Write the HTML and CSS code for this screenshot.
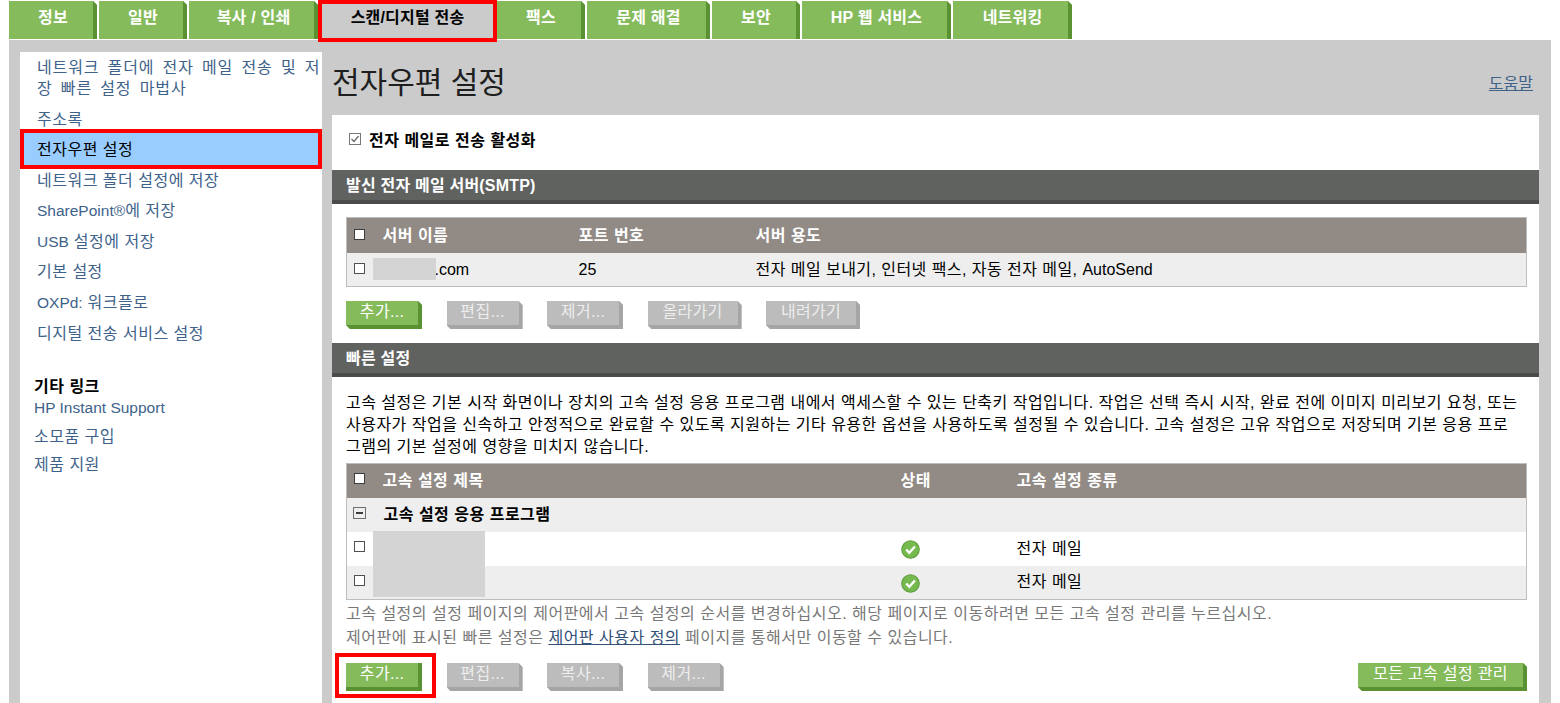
FILE: index.html
```html
<!DOCTYPE html>
<html lang="ko">
<head>
    <meta charset="utf-8">
    <title>전자우편 설정</title>
    <link rel="stylesheet" href="styles.css">
</head>
<body>
    <div id="tabs">
        <a class="tab w_88">정보</a>
        <a class="tab w_88">일반</a>
        <a class="tab w_129">복사 / 인쇄</a>
        <a class="tab tab_active">스캔/디지털 전송</a>
        <a class="tab w_88">팩스</a>
        <a class="tab w_123">문제 해결</a>
        <a class="tab w_88">보안</a>
        <a class="tab w_149">HP 웹 서비스</a>
        <a class="tab w_119">네트워킹</a>
    </div>
    <div id="frame">
        <div id="sidebar">
            <a class="side_link two_line">네트워크 폴더에 전자 메일 전송 및 저장 빠른 설정 마법사</a>
            <a class="side_link">주소록</a>
            <a class="side_link side_active">전자우편 설정</a>
            <a class="side_link">네트워크 폴더 설정에 저장</a>
            <a class="side_link"><span class="latin">SharePoint®</span>에 저장</a>
            <a class="side_link"><span class="latin">USB</span> 설정에 저장</a>
            <a class="side_link">기본 설정</a>
            <a class="side_link"><span class="latin">OXPd:</span> 워크플로</a>
            <a class="side_link">디지털 전송 서비스 설정</a>
            <div class="other_title">기타 링크</div>
            <a class="other_link"><span class="latin">HP Instant Support</span></a>
            <a class="other_link">소모품 구입</a>
            <a class="other_link">제품 지원</a>
        </div>
        <div id="main">
            <div id="title_row">
                <h1>전자우편 설정</h1>
                <a class="help">도움말</a>
            </div>
            <div id="panel">
                <div id="enable_row">
                    <svg class="check_icon" width="12" height="12" viewBox="0 0 12 12"><rect x="0.5" y="0.5" width="11" height="11" fill="#fff" stroke="#777"/><path d="M2.5 6l2.5 2.5 4.5-5.5" fill="none" stroke="#666" stroke-width="1.2"/></svg>
                    <b>전자 메일로 전송 활성화</b>
                </div>
                <div class="bar">발신 전자 메일 서버(SMTP)</div>
                <div class="section">
                    <table class="grid smtp">
                        <tr class="head">
                            <td class="c_check"><span class="box box_head"></span></td>
                            <td class="c_name">서버 이름</td>
                            <td class="c_port">포트 번호</td>
                            <td>서버 용도</td>
                        </tr>
                        <tr class="shade">
                            <td class="c_check"><span class="box"></span></td>
                            <td class="c_name c_host"><span class="blur_host"></span><span class="latin_row">.com</span></td>
                            <td class="c_port c_num"><span class="latin_row">25</span></td>
                            <td class="c_usage">전자 메일 보내기, 인터넷 팩스, 자동 전자 메일, <span class="latin_row">AutoSend</span></td>
                        </tr>
                    </table>
                    <div class="btn_row">
                        <a class="btn btn_on w_76">추가...</a>
                        <a class="btn w_76">편집...</a>
                        <a class="btn w_76">제거...</a>
                        <a class="btn w_94">올라가기</a>
                        <a class="btn w_94">내려가기</a>
                    </div>
                </div>
                <div class="bar">빠른 설정</div>
                <div class="section">
                    <p class="intro">고속 설정은 기본 시작 화면이나 장치의 고속 설정 응용 프로그램 내에서 액세스할 수 있는 단축키 작업입니다. 작업은 선택 즉시 시작, 완료 전에 이미지 미리보기 요청, 또는 사용자가 작업을 신속하고 안정적으로 완료할 수 있도록 지원하는 기타 유용한 옵션을 사용하도록 설정될 수 있습니다. 고속 설정은 고유 작업으로 저장되며 기본 응용 프로그램의 기본 설정에 영향을 미치지 않습니다.</p>
                    <table class="grid quick">
                        <tr class="head">
                            <td class="c_check"><span class="box box_head"></span></td>
                            <td class="c_title">고속 설정 제목</td>
                            <td class="c_state">상태</td>
                            <td>고속 설정 종류</td>
                        </tr>
                        <tr class="shade group">
                            <td class="c_check"><span class="box box_minus"></span></td>
                            <td colspan="3"><b class="group_name">고속 설정 응용 프로그램</b></td>
                        </tr>
                        <tr>
                            <td class="c_check"><span class="box"></span></td>
                            <td class="c_title"><span class="blur_quick"></span></td>
                            <td class="c_state"><svg class="ok" width="19" height="19" viewBox="0 0 20 20"><circle cx="10" cy="10" r="9.2" fill="#76b94e" stroke="#5f9f3e" stroke-width="1.2"/><path d="M5.5 10l3.2 3.4 6-6.6" fill="none" stroke="#fff" stroke-width="2.6"/></svg></td>
                            <td>전자 메일</td>
                        </tr>
                        <tr class="shade">
                            <td class="c_check"><span class="box"></span></td>
                            <td class="c_title"></td>
                            <td class="c_state"><svg class="ok" width="19" height="19" viewBox="0 0 20 20"><circle cx="10" cy="10" r="9.2" fill="#76b94e" stroke="#5f9f3e" stroke-width="1.2"/><path d="M5.5 10l3.2 3.4 6-6.6" fill="none" stroke="#fff" stroke-width="2.6"/></svg></td>
                            <td>전자 메일</td>
                        </tr>
                    </table>
                    <div class="note note_first">고속 설정의 설정 페이지의 제어판에서 고속 설정의 순서를 변경하십시오. 해당 페이지로 이동하려면 모든 고속 설정 관리를 누르십시오.</div>
                    <div class="note">제어판에 표시된 빠른 설정은 <a class="note_link">제어판 사용자 정의</a> 페이지를 통해서만 이동할 수 있습니다.</div>
                    <div class="btn_row btn_row_last">
                        <a class="btn btn_on w_76 marked">추가...</a>
                        <a class="btn w_76">편집...</a>
                        <a class="btn w_76">복사...</a>
                        <a class="btn w_76">제거...</a>
                        <a class="btn btn_on w_169 push_right">모든 고속 설정 관리</a>
                    </div>
                </div>
            </div>
        </div>
    </div>
</body>
</html>
```

FILE: styles.css
```css
html, body {
    margin: 0;
    padding: 0;
    height: 100%;
    overflow: hidden;
    background-color: white;
    font-family: "Liberation Sans", "Noto Sans CJK KR", sans-serif;
    font-size: 16px;
    letter-spacing: 0.5px;
    color: black;
}
.latin {
    letter-spacing: 0;
    font-size: 15.5px;
}
.latin_row {
    letter-spacing: 0;
}
#tabs {
    display: flex;
    height: 40px;
    padding: 1px 0 0 9px;
    box-sizing: border-box;
    gap: 2px;
}
.tab {
    display: block;
    box-sizing: border-box;
    height: 38px;
    padding-top: 3px;
    text-align: center;
    font-weight: bold;
    letter-spacing: 0.2px;
    color: white;
    background-color: rgb(134,187,92);
    box-shadow: inset -4px 0 0 rgb(90,145,50);
    clip-path: polygon(0 0, calc(100% - 4px) 0, 100% 4px, 100% 100%, 0 100%);
}
.tab_active {
    width: 179px;
    height: 42px;
    margin: -1px -2px 0 -2px;
    padding-top: 0;
    color: black;
    background-color: rgb(203,203,203);
    border: 4px solid red;
    box-shadow: none;
    clip-path: none;
}
.w_88 { width: 88px; }
.w_129 { width: 129px; }
.w_123 { width: 123px; }
.w_149 { width: 149px; }
.w_119 { width: 119px; }
#frame {
    display: flex;
    height: 663px;
    margin: 0 9px;
    padding: 12px 12px 0 11px;
    box-sizing: border-box;
    background-color: rgb(203,203,203);
}
#sidebar {
    width: 302px;
    flex-shrink: 0;
    background-color: white;
    padding-top: 4px;
    box-sizing: border-box;
}
.side_link {
    display: block;
    box-sizing: border-box;
    height: 30.6px;
    padding: 5px 4px 0 17px;
    line-height: 22px;
    color: rgb(62,98,138);
}
.two_line {
    height: 48px;
    padding: 1px 0 0 17px;
    line-height: 21px;
    letter-spacing: 0.85px;
    word-spacing: 3px;
}
.side_active {
    height: 40px;
    margin-top: -6px;
    margin-bottom: -4px;
    padding: 6px 0 0 13px;
    color: black;
    background-color: rgb(153,204,255);
    border: 4px solid red;
}
.other_title {
    margin: 28px 0 -3px 14px;
    font-weight: bold;
    line-height: 22px;
}
.other_link {
    display: block;
    margin: 0 0 0 14px;
    height: 28.5px;
    line-height: 26px;
    color: rgb(62,98,138);
}
#main {
    flex-grow: 1;
    margin-left: 10px;
    display: flex;
    flex-direction: column;
    min-width: 0;
}
#title_row {
    display: flex;
    justify-content: space-between;
    height: 63px;
    flex-shrink: 0;
}
h1 {
    margin: 11px 0 0 0;
    font-size: 30px;
    font-weight: normal;
    letter-spacing: 0;
    line-height: 40px;
    color: rgb(30,30,30);
}
.help {
    margin: 21px 6px 0 0;
    line-height: 22px;
    letter-spacing: 0;
    color: rgb(62,98,138);
    text-decoration: underline;
}
#panel {
    flex-grow: 1;
    background-color: white;
}
#enable_row {
    display: flex;
    align-items: center;
    height: 47px;
    padding: 0 0 8px 17px;
    gap: 8px;
}
.bar {
    height: 34px;
    box-sizing: border-box;
    padding: 5px 0 0 14px;
    line-height: 22px;
    font-weight: bold;
    letter-spacing: 0.2px;
    color: white;
    background-color: rgb(96,98,95);
    border-bottom: 4px solid rgb(75,76,74);
}
.section {
    padding: 13px 12px 0 14px;
}
.grid {
    width: 100%;
    border-collapse: collapse;
    border: 1px solid rgb(190,190,190);
    table-layout: fixed;
}
.grid td {
    box-sizing: border-box;
    padding: 0 0 2px 0;
    height: 34px;
    vertical-align: middle;
}
.quick td {
    padding-bottom: 4px;
}
.head td {
    height: 35px;
    font-weight: bold;
    color: white;
    background-color: rgb(145,138,133);
}
.quick .head td {
    height: 34px;
}
.shade td {
    background-color: rgb(238,238,238);
}
.c_check {
    width: 36px;
    padding-left: 7px !important;
}
.c_name { width: 196px; }
.c_port { width: 177px; }
.c_num {
    padding: 2px 0 0 0 !important;
}
.c_host {
    position: relative;
    padding: 2px 0 0 52px !important;
}
.c_usage { letter-spacing: 0.45px; }
.c_title {
    width: 518px;
    position: relative;
}
.c_state { width: 116px; }
.box {
    display: block;
    width: 9px;
    height: 9px;
    background-color: white;
    border: 1px solid rgb(80,80,80);
}
.box_head {
    border-color: rgb(60,60,60);
}
.box_minus {
    position: relative;
    width: 11px;
    height: 10px;
    margin-left: -1px;
    background-color: rgb(238,238,238);
    border-color: rgb(110,110,110);
}
.box_minus::after {
    content: "";
    position: absolute;
    left: 2px;
    right: 2px;
    top: 4px;
    height: 2px;
    background-color: rgb(60,60,60);
}
.group_name { margin-left: 1px; }
.blur_host {
    position: absolute;
    left: -10px;
    top: 5px;
    width: 63px;
    height: 22px;
    background-color: rgb(212,212,212);
}
.blur_quick {
    position: absolute;
    z-index: 1;
    left: -10px;
    top: -1px;
    width: 112px;
    height: 66px;
    background-color: rgb(212,212,212);
}
.ok {
    display: block;
    margin-top: 6px;
}
.btn_row {
    display: flex;
    gap: 24.5px;
    padding-top: 14px;
    padding-bottom: 14px;
}
.btn {
    display: block;
    box-sizing: border-box;
    height: 28px;
    padding-right: 4px;
    text-align: center;
    line-height: 21px;
    letter-spacing: 0.3px;
    color: rgb(238,238,238);
    background-color: rgb(188,188,188);
    box-shadow: inset -4px -4px 0 rgb(165,165,165);
    clip-path: polygon(0 0, calc(100% - 4px) 0, 100% 4px, 100% 100%, 4px 100%, 0 calc(100% - 4px));
}
.btn_on {
    color: white;
    background-color: rgb(134,187,92);
    box-shadow: inset -4px -4px 0 rgb(90,145,50);
}
.w_76 { width: 76px; }
.w_94 { width: 94px; }
.w_169 { width: 169px; }
.push_right { margin-left: auto; }
.intro {
    margin: 2px 0 5px 0;
    padding-right: 7px;
    line-height: 22px;
    letter-spacing: 0.48px;
}
.note {
    margin-top: 2px;
    height: 22px;
    line-height: 22px;
    color: rgb(120,120,120);
}
.note_first { margin-top: 3px; }
.note_link {
    color: rgb(50,80,120);
    text-decoration: underline;
}
.btn_row_last { padding-top: 14px; }
.marked {
    clip-path: none;
    position: relative;
}
.marked::after {
    content: "";
    position: absolute;
    left: -11px;
    right: -14px;
    top: -10px;
    bottom: -7px;
    border: 4px solid red;
}
```
